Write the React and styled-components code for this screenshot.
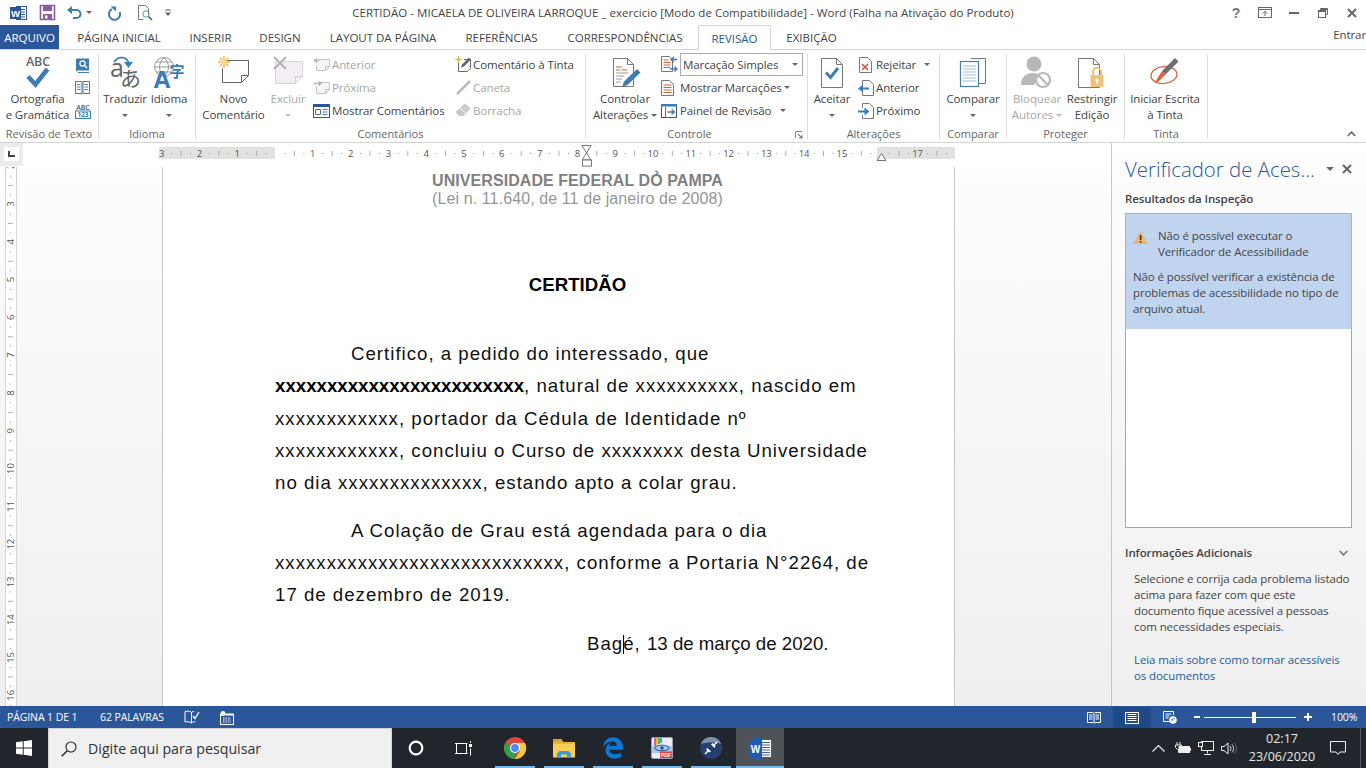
import React from 'react';
import styled, { createGlobalStyle } from 'styled-components';
import { FaEdgeLegacy } from 'react-icons/fa6';

const UI = '"Open Sans", "Noto Sans", "Liberation Sans", sans-serif';
const BLUE = '#2b579a';
const ICON_BLUE = '#3e7cb8';

const Global = createGlobalStyle`
  html, body { margin: 0; padding: 0; width: 1366px; height: 768px; overflow: hidden; background: #fff; }
  #root { width: 1366px; height: 768px; }
  * { box-sizing: border-box; }
`;

const Win = styled.div`
  width: 1366px;
  height: 768px;
  display: flex;
  flex-direction: column;
  overflow: hidden;
  font-family: ${UI};
  font-size: 11.5px;
  letter-spacing: -0.1px;
  color: #444;
`;

/* title bar */
const TitleBar = styled.div`
  height: 25px;
  display: grid;
  grid-template-columns: 1fr auto 1fr;
  align-items: center;
  background: #fff;
`;
const Qat = styled.div`
  display: flex;
  align-items: center;
`;
const Slot = styled.div`
  width: ${p => p.$w}px;
  height: 25px;
  display: flex;
  align-items: center;
  justify-content: center;
  gap: 4px;
`;
const TitleText = styled.div`
  white-space: nowrap;
  letter-spacing: 0.03px;
`;
const WinControls = styled.div`
  display: flex;
  justify-content: flex-end;
`;

/* tabs */
const TabRow = styled.div`
  height: 25px;
  display: flex;
  background: #fff;
  border-bottom: 1px solid #d4d4d4;
`;
const Tab = styled.div`
  width: ${p => p.$w}px;
  height: ${p => (p.$active ? 25 : 24)}px;
  margin-left: ${p => p.$ml || 0}px;
  display: flex;
  align-items: center;
  justify-content: center;
  white-space: nowrap;
  letter-spacing: 0;
  background: ${p => (p.$file ? BLUE : '#fff')};
  color: ${p => (p.$file ? '#fff' : p.$active ? BLUE : '#444')};
  ${p => p.$active && 'border: 1px solid #d4d4d4; border-bottom: none; position: relative; z-index: 1;'}
`;
const Entrar = styled.div`
  margin-left: auto;
  line-height: 19px;
  white-space: nowrap;
`;

/* ribbon */
const Ribbon = styled.div`
  height: 93px;
  display: flex;
  padding-top: 4px;
  background: #fff;
  border-bottom: 1px solid #d4d4d4;
`;
const Group = styled.div`
  width: ${p => p.$w}px;
  height: 85px;
  display: flex;
  flex-direction: column;
  border-right: 1px solid #dedede;
  position: relative;
`;
const GroupBody = styled.div`
  height: 71px;
  display: flex;
  padding-left: ${p => p.$pl || 0}px;
`;
const GroupLabel = styled.div`
  height: 14px;
  line-height: 18px;
  padding-right: ${p => p.$pr || 0}px;
  text-align: center;
  color: #666;
  white-space: nowrap;
  letter-spacing: 0;
  font-size: 11px;
`;
const Launcher = styled.div`
  position: absolute;
  right: 4px;
  bottom: 0;
  line-height: 0;
`;
const Large = styled.div`
  width: ${p => p.$w}px;
  flex: none;
  display: flex;
  flex-direction: column;
  align-items: center;
  color: ${p => (p.$off ? '#a6a6a6' : '#444')};
`;
const LargeIcon = styled.div`
  height: 37px;
  padding-top: ${p => p.$pt || 0}px;
  display: flex;
  align-items: flex-start;
  justify-content: center;
`;
const LargeLine = styled.div`
  height: 16px;
  line-height: 16px;
  white-space: nowrap;
  display: flex;
  align-items: center;
  gap: 3px;
`;
const Stack = styled.div`
  margin-left: ${p => p.$ml || 0}px;
  margin-top: -1px;
  width: ${p => (p.$w ? `${p.$w}px` : 'auto')};
  display: flex;
  flex-direction: column;
  flex: none;
`;
const SmallBtn = styled.div`
  height: 23px;
  display: flex;
  align-items: center;
  gap: ${p => p.$gap ?? 3}px;
  white-space: nowrap;
  color: ${p => (p.$off ? '#a6a6a6' : '#444')};
`;
const Caret = styled.span`
  display: inline-block;
  flex: none;
  width: 0;
  height: 0;
  margin-left: ${p => p.$ml || 0}px;
  border-left: ${p => p.$size || 3}px solid transparent;
  border-right: ${p => p.$size || 3}px solid transparent;
  border-top: ${p => p.$size || 3}px solid ${p => (p.$off ? '#bdbdbd' : '#666')};
`;
const Dropdown = styled.div`
  width: 123px;
  height: 23px;
  margin-left: -1px;
  padding: 0 4px 0 2px;
  display: flex;
  align-items: center;
  justify-content: space-between;
  border: 1px solid #ababab;
`;
const Collapse = styled.div`
  margin-left: auto;
  margin-right: 10px;
  margin-bottom: 5px;
  align-self: flex-end;
  line-height: 0;
`;

/* middle area */
const Middle = styled.div`
  height: 563px;
  display: flex;
`;
const Workspace = styled.div`
  flex: 1;
  display: flex;
  flex-direction: column;
  min-width: 0;
  background: linear-gradient(#ffffff, #fdfdfd 5%, #efefef);
`;
const RulerRow = styled.div`
  height: 24px;
  flex: none;
  display: flex;
  background: #fff;
`;
const Corner = styled.div`
  width: 23px;
  height: 23px;
  flex: none;
  padding: 4px;
  background: #ececec;
`;
const CornerInner = styled.div`
  width: 15px;
  height: 14px;
  display: flex;
  align-items: center;
  justify-content: center;
  background: #fff;
`;
const HRulerWrap = styled.div`
  margin-left: 136px;
  line-height: 0;
`;
const DocRow = styled.div`
  flex: 1;
  display: flex;
  overflow: hidden;
  min-height: 0;
`;
const VRulerWrap = styled.div`
  width: 12px;
  margin-left: 5px;
  flex: none;
  line-height: 0;
  background: #fff;
  border-left: 1px solid #d6d6d6;
  border-right: 1px solid #d6d6d6;
`;
const Page = styled.div`
  width: 793px;
  margin-left: 145px;
  flex: none;
  padding: 5px 0 0 112px;
  background: #fff;
  border-left: 1px solid #c6c6c6;
  border-right: 1px solid #c6c6c6;
  font-family: "Liberation Sans", Arial, sans-serif;
  color: #111;
  letter-spacing: 0;
`;
const Sheet = styled.div`
  width: 605px;
`;
const Uni = styled.div`
  height: 18px;
  line-height: 18px;
  text-align: center;
  font-size: 16px;
  white-space: nowrap;
  font-weight: ${p => (p.$bold ? 700 : 400)};
  letter-spacing: ${p => (p.$bold ? 0.07 : 0.1)}px;
  color: ${p => (p.$bold ? '#808080' : '#969696')};
`;
const DocTitle = styled.div`
  margin-top: 61px;
  height: 32px;
  line-height: 32px;
  text-align: center;
  font-size: 18.67px;
  font-weight: 700;
  color: #000;
`;
const Para = styled.div`
  margin-top: ${p => p.$mt}px;
  font-size: 18.67px;
  line-height: 32.33px;
  letter-spacing: 1px;
  white-space: nowrap;
`;
const Indent = styled.span`
  display: inline-block;
  width: 76px;
`;
const Strong = styled.b`
  letter-spacing: 0;
  color: #000;
`;
const DateLine = styled(Para)`
  padding-left: 312px;
`;
const Tight = styled.span`
  letter-spacing: 0;
`;
const TextCaret = styled.span`
  display: inline-block;
  width: 1px;
  height: 19px;
  margin-right: -1px;
  vertical-align: -4px;
  background: #000;
`;

/* side pane */
const Pane = styled.div`
  width: 255px;
  flex: none;
  padding: 11px 0 0 13px;
  border-left: 1px solid #c6c6c6;
  background: linear-gradient(#ffffff, #fdfdfd 5%, #efefef);
`;
const PaneHead = styled.div`
  height: 30px;
  display: flex;
  align-items: center;
`;
const PaneTitle = styled.div`
  width: 201px;
  font-size: 20.4px;
  font-weight: 300;
  color: ${BLUE};
  white-space: nowrap;
  letter-spacing: 0;
`;
const PaneSub = styled.div`
  margin-top: ${p => p.$mt}px;
  height: 16px;
  line-height: 16px;
  font-weight: 600;
  color: #444;
  font-size: 11.5px;
  white-space: nowrap;
  display: flex;
  justify-content: space-between;
  align-items: center;
  width: 223px;
`;
const Results = styled.div`
  margin-top: 6px;
  width: 227px;
  height: 315px;
  background: #fff;
  border: 1px solid #a6a6a6;
`;
const Banner = styled.div`
  height: 116px;
  margin: -1px -1px 0;
  padding: 14px 7px 0 7px;
  background: #c1d4ef;
  border: 1px solid #9db4d6;
  border-bottom: none;
  line-height: 16px;
  white-space: nowrap;
`;
const WarnRow = styled.div`
  display: flex;
  gap: 10px;
  margin-bottom: 9px;
`;
const WarnIcon = styled.div`
  padding-top: 3px;
  line-height: 0;
`;
const PaneText = styled.div`
  margin-top: ${p => p.$mt}px;
  padding-left: 9px;
  line-height: 16px;
  white-space: nowrap;
  color: ${p => (p.$link ? '#1f5c99' : '#444')};
`;

/* status bar */
const StatusBar = styled.div`
  height: 22px;
  flex: none;
  display: flex;
  align-items: center;
  background: ${BLUE};
  color: #fff;
  font-size: 10.5px;
  padding-left: 7px;
`;
const StatusText = styled.span`
  width: ${p => p.$w}px;
  white-space: nowrap;
`;
const StatusIcon = styled.div`
  width: ${p => p.$w}px;
  height: 21px;
  margin-left: ${p => p.$ml || 0}px;
  margin-top: 1px;
  flex: none;
  display: flex;
  align-items: center;
  justify-content: center;
  background: ${p => (p.$on ? '#1f4a88' : 'transparent')};
`;
const Zoom = styled.div`
  width: 118px;
  margin-left: 17px;
  display: flex;
  align-items: center;
  flex: none;
`;
const Track = styled.div`
  width: 100px;
  height: 1px;
  margin: 0 8px 0 4px;
  background: #fff;
  position: relative;
`;
const Thumb = styled.div`
  position: absolute;
  left: 48px;
  top: -5px;
  width: 4px;
  height: 11px;
  background: #fff;
`;
const ZoomText = styled.span`
  margin-left: 19px;
  font-size: 10.5px;
`;

/* taskbar */
const Taskbar = styled.div`
  height: 40px;
  flex: none;
  display: flex;
  background: #20262b;
`;
const StartBtn = styled.div`
  width: 48px;
  display: flex;
  align-items: center;
  justify-content: center;
`;
const SearchBox = styled.div`
  width: 344px;
  display: flex;
  align-items: center;
  gap: 11px;
  padding-left: 12px;
  background: #f0f0f0;
  border: 1px solid #d2d2d2;
  border-bottom: none;
  font-size: 14.2px;
  color: #333;
  letter-spacing: 0;
`;
const TaskSlot = styled.div`
  width: ${p => p.$w}px;
  margin-left: ${p => p.$ml || 0}px;
  flex: none;
  display: flex;
  align-items: center;
  justify-content: center;
  background: ${p => (p.$active ? '#4f5357' : 'transparent')};
  box-shadow: ${p => (p.$run ? 'inset 0 -2px 0 #76b9ed' : 'none')};
`;
const Tray = styled.div`
  margin-left: auto;
  display: flex;
  align-items: center;
`;
const TrayIcon = styled.div`
  width: ${p => p.$w}px;
  display: flex;
  justify-content: center;
  line-height: 0;
`;
const Clock = styled.div`
  width: 68px;
  margin-left: 8px;
  text-align: center;
  color: #e8e8e8;
  font-size: 12.5px;
  line-height: 18px;
  letter-spacing: 0;
`;
const NotifyBtn = styled.div`
  width: 45px;
  height: 40px;
  margin-left: 0;
  display: flex;
  align-items: center;
  justify-content: center;
  border-right: 1px solid #55595d;
  margin-right: 5px;
`;

const Svg = styled.svg`
  display: block;
  flex: none;
  overflow: visible;
`;
const Ico = ({ w = 16, h = 16, children }) => (
  <Svg width={w} height={h} viewBox={`0 0 ${w} ${h}`} fill="none">{children}</Svg>
);

/* quick access icons */
const WordMini = () => (
  <Ico w={17} h={16}>
    <rect x="6.5" y="1.5" width="10" height="13" fill="#fff" stroke={BLUE} />
    <path d="M11 4.5h4M11 7h4M11 9.5h4M11 12h4" stroke={BLUE} />
    <rect x="0" y="2" width="11" height="12" fill={BLUE} />
    <text x="5.5" y="11.5" fontSize="9.5" fontWeight="700" fill="#fff" textAnchor="middle" fontFamily="Liberation Sans">W</text>
  </Ico>
);
const SaveIco = () => (
  <Ico w={15} h={15}>
    <path d="M0.5 0.5h14v14h-14z" fill="#fff" stroke="#8b5ba8" strokeWidth="1.6" />
    <rect x="3" y="1" width="9" height="5" fill="#8b5ba8" />
    <rect x="3" y="9" width="9" height="5.5" fill="#8b5ba8" />
    <rect x="5" y="10.5" width="2.5" height="3" fill="#fff" />
  </Ico>
);
const UndoIco = () => (
  <Ico w={15} h={13}>
    <path d="M2 4h7.5a4 4 0 0 1 0 8H6" stroke="#3e7cb8" strokeWidth="2" />
    <path d="M5 0L0 4l5 4z" fill="#3e7cb8" />
  </Ico>
);
const RedoIco = () => (
  <Ico w={14} h={14}>
    <path d="M4 2.2A5.6 5.6 0 1 0 11.7 5" stroke="#3e7cb8" strokeWidth="2" transform="translate(0 1)" />
    <path d="M2.5 0.5h5.5v5z" fill="#3e7cb8" />
  </Ico>
);
const PreviewIco = () => (
  <Ico w={15} h={16}>
    <path d="M0.5 0.5h7l3 3v6M0.5 0.5v14h5" stroke="#777" />
    <circle cx="8" cy="9" r="3.2" stroke="#5f8fb4" />
    <path d="M10.5 11.5l3.5 3.5" stroke="#555" strokeWidth="1.6" />
  </Ico>
);
const CustomizeIco = () => (
  <Ico w={6} h={7}>
    <path d="M0 1h6" stroke="#666" />
    <path d="M0 3.5h6L3 7z" fill="#666" />
  </Ico>
);
const HelpIco = () => (
  <Ico w={10} h={13}>
    <text x="5" y="12" textAnchor="middle" fontSize="14" fontWeight="700" fill="#777" fontFamily="Liberation Sans">?</text>
  </Ico>
);
const RibbonOptsIco = () => (
  <Ico w={14} h={11}>
    <rect x="0.5" y="0.5" width="13" height="10" stroke="#666" />
    <path d="M0.5 2.5h13" stroke="#666" />
    <path d="M7 9V4.5M4.8 6.5L7 4.2l2.2 2.3" stroke="#666" />
  </Ico>
);
const MinIco = () => <Ico w={10} h={2}><rect width="10" height="2" fill="#666" /></Ico>;
const MaxIco = () => (
  <Ico w={10} h={10}>
    <path d="M2.5 2.5v-2h7v6h-2" stroke="#666" />
    <rect x="0.5" y="2.5" width="7" height="7" stroke="#666" />
    <path d="M0.5 3.5h7M2.5 1.5h7" stroke="#666" />
  </Ico>
);
const CloseIco = ({ size = 10, color = '#666' }) => (
  <Ico w={size} h={size}>
    <path d={`M1 1L${size - 1} ${size - 1}M${size - 1} 1L1 ${size - 1}`} stroke={color} strokeWidth="2" />
  </Ico>
);

/* ribbon large icons */
const SpellIco = () => (
  <Ico w={30} h={36}>
    <text x="15" y="12" textAnchor="middle" fontSize="12.5" fontWeight="600" fill="#666" fontFamily="Open Sans">ABC</text>
    <path d="M5 22.5l7.5 8L24.5 15" stroke={ICON_BLUE} strokeWidth="4.6" />
  </Ico>
);
const TranslateIco = () => (
  <Ico w={34} h={34}>
    <text x="2" y="22" fontSize="25" fill="#666" fontFamily="Open Sans">a</text>
    <text x="12" y="31" fontSize="21" fill="#666" fontFamily="Noto Sans CJK JP">あ</text>
    <path d="M6 7c4-6 12-6 15 1" stroke={ICON_BLUE} strokeWidth="1.8" />
    <path d="M16 7h9l-4.500 6z" fill={ICON_BLUE} />
  </Ico>
);
const LanguageIco = () => (
  <Ico w={34} h={34}>
    <circle cx="12" cy="12" r="9.5" stroke="#999" />
    <path d="M12 2.5c-6 6-6 13 0 19M12 2.500c6 6 6 13 0 19M2.500 12h19M4 7h16M4 17h16" stroke="#999" />
    <text x="10" y="33" textAnchor="middle" fontSize="24" fontWeight="700" fill={ICON_BLUE} fontFamily="Open Sans">A</text>
    <text x="25" y="22" textAnchor="middle" fontSize="15" fontWeight="700" fill={ICON_BLUE} fontFamily="Noto Sans CJK SC">字</text>
  </Ico>
);
const Sun = ({ x, y, c = '#f0b74f' }) => (
  <g transform={`translate(${x} ${y})`}>
    <path d="M6 0v12M0 6h12M1.800 1.800l8.400 8.400M10.200 1.800L1.800 10.200" stroke={c} strokeWidth="1.400" />
    <circle cx="6" cy="6" r="2.600" fill="#ffd98a" />
  </g>
);
const NoteNewIco = () => (
  <Ico w={32} h={30}>
    <path d="M9 4.500h21.500v15l-7 7h-19v-14" stroke="#666" fill="#fff" />
    <path d="M23.500 26.500v-7h7" stroke="#666" />
    <Sun x={0} y={0} />
  </Ico>
);
const NoteDelIco = () => (
  <Ico w={32} h={30}>
    <path d="M3.500 5.500h27v15l-7 7h-20z" fill="#f3eef3" stroke="#d6d6d6" />
    <path d="M23.500 27.500v-7h7" stroke="#cfcfcf" />
    <path d="M2 1l12 12M14 1L2 13" stroke="#b3b3b3" strokeWidth="2" />
  </Ico>
);
const TrackIco = () => (
  <Ico w={30} h={34}>
    <path d="M3.500 4.500h14l6 6v22h-20z" fill="#fff" stroke="#777" />
    <path d="M17.500 4.500v6h6" stroke="#777" />
    <path d="M6 13h6M6 16h4M11.500 16h6" stroke="#d2603a" strokeWidth="1.100" />
    <path d="M6 19h12M6 22h8M6 25h6M6 28h5" stroke="#999" strokeWidth="1.100" />
    <path d="M27 15l3.500 3.500-13 12.500-5.500 2 2-5.500z" fill={ICON_BLUE} />
  </Ico>
);
const AcceptIco = () => (
  <Ico w={22} h={30}>
    <path d="M0.500 0.500h15l6 6v23h-21z" fill="#fff" stroke="#777" />
    <path d="M15.500 0.500v6h6" stroke="#777" />
    <path d="M5 14.500l4.500 5L17 10" stroke={ICON_BLUE} strokeWidth="3" />
  </Ico>
);
const CompareIco = () => (
  <Ico w={26} h={30}>
    <path d="M10.500 0.500h15v25h-8" fill="#fff" stroke="#777" />
    <rect x="0.500" y="3.500" width="18" height="25" fill="#fff" stroke="#4a7db3" strokeWidth="1.200" />
    <path d="M3 8h13M3 11h13M3 14h13M3 17h13M3 20h13M3 23h13" stroke="#9db9d8" />
  </Ico>
);
const BlockIco = () => (
  <Ico w={32} h={32}>
    <circle cx="13" cy="8" r="7.500" fill="#b8b8b8" />
    <path d="M0 29c0-8 5-12 12-12 3 0 5 1 7 2l-6 10z" fill="#b8b8b8" />
    <circle cx="22" cy="24" r="7" fill="#fff" stroke="#b8b8b8" strokeWidth="2.200" />
    <path d="M17.500 19.500l9 9" stroke="#b8b8b8" strokeWidth="2.200" />
  </Ico>
);
const RestrictIco = () => (
  <Ico w={28} h={30}>
    <path d="M0.500 0.500h15l6 6v23h-21z" fill="#fff" stroke="#777" />
    <path d="M15.500 0.500v6h6" stroke="#777" />
    <path d="M15 17v-3a4 4 0 0 1 8 0v3" stroke="#eac27c" strokeWidth="2" />
    <rect x="12.500" y="17" width="13" height="12" fill="#eec37a" />
    <circle cx="19" cy="22" r="1.600" fill="#fff" />
    <rect x="18.300" y="22" width="1.400" height="4" fill="#fff" />
  </Ico>
);
const InkIco = () => (
  <Ico w={30} h={30}>
    <ellipse cx="14" cy="18" rx="13" ry="8.500" stroke="#d9623c" strokeWidth="1.300" transform="rotate(-6 14 18)" />
    <path d="M25 1l3.500 3.500-13 13L12 14z" fill="#6e6e6e" />
    <path d="M12 14l3.500 3.500L9 24l-4 2 2-4z" fill="#d9623c" />
  </Ico>
);

/* ribbon small icons */
const ThesaurusIco = () => (
  <Ico w={15} h={16}>
    <path d="M1 1.500h13v12H3a2 2 0 0 0-2 2z" fill={ICON_BLUE} />
    <path d="M3 15.500h11" stroke={ICON_BLUE} />
    <circle cx="7.500" cy="6.500" r="2.600" stroke="#fff" strokeWidth="1.200" />
    <path d="M9.500 8.500l2.500 2.500" stroke="#fff" strokeWidth="1.400" />
  </Ico>
);
const BookIco = () => (
  <Ico w={15} h={13}>
    <path d="M0.500 0.500h6.500v12h-6.500zM8 0.500h6.500v12H8z" stroke={ICON_BLUE} />
    <path d="M2 3.500h3.500M2 6h3.500M2 8.500h3.500M9.500 3.500H13M9.500 6H13M9.500 8.500H13" stroke="#777" />
  </Ico>
);
const CountIco = () => (
  <Ico w={16} h={16}>
    <text x="8" y="6.500" textAnchor="middle" fontSize="7" fontWeight="600" fill="#555" fontFamily="Open Sans">ABC</text>
    <rect x="0.500" y="8" width="15" height="7.500" stroke={ICON_BLUE} fill="#fff" />
    <text x="8" y="14.300" textAnchor="middle" fontSize="6.500" fontWeight="700" fill={ICON_BLUE} fontFamily="Open Sans">123</text>
  </Ico>
);
const PrevNoteIco = () => (
  <Ico w={17} h={15}>
    <path d="M5 2.500h11.500v7l-4 4H3.500V8" stroke="#c6c6c6" fill="#f8f5f8" />
    <path d="M12.500 13.500v-4h4" stroke="#c6c6c6" />
    <path d="M1 3.500h5" stroke="#b5b5b5" strokeWidth="1.400" />
    <path d="M4 0.500L0.500 3.500 4 6.500z" fill="#b5b5b5" />
  </Ico>
);
const NextNoteIco = () => (
  <Ico w={17} h={15}>
    <path d="M7 2.500h9.500v7l-4 4H3.500V6" stroke="#c6c6c6" fill="#f8f5f8" />
    <path d="M12.500 13.500v-4h4" stroke="#c6c6c6" />
    <path d="M0.500 3.500H7" stroke="#b5b5b5" strokeWidth="1.400" />
    <path d="M5.500 0.500L9 3.500 5.500 6.500z" fill="#b5b5b5" />
  </Ico>
);
const ShowNotesIco = () => (
  <Ico w={17} h={14}>
    <rect x="0.500" y="0.500" width="16" height="13" fill="#fff" stroke="#44546a" />
    <rect x="0" y="0" width="17" height="3" fill={BLUE} />
    <path d="M2.500 5.500h5v5h-5z" stroke="#666" />
    <path d="M9.500 5.500h5M9.500 8h5M9.500 10.500h5" stroke={ICON_BLUE} />
  </Ico>
);
const InkNoteIco = () => (
  <Ico w={17} h={17}>
    <path d="M3.500 6.500v9h9l3-3V3.500H9" stroke="#666" fill="#fff" />
    <circle cx="3.500" cy="3.500" r="2" fill="#f4c76e" />
    <path d="M3.500 0v7M0 3.500h7" stroke="#f0b74f" />
    <path d="M14 1.500l2 2-7 7-3 1 1-3z" fill="#666" />
  </Ico>
);
const PenIco = () => (
  <Ico w={16} h={16}>
    <path d="M15 1L2 14" stroke="#bdbdbd" strokeWidth="2.600" />
  </Ico>
);
const EraserIco = () => (
  <Ico w={16} h={15}>
    <path d="M10 0.500l5.500 5-7 7.500H4l-3.500-4z" fill="#c9c9c9" />
    <path d="M4.500 4.500l6 5.500" stroke="#fff" />
  </Ico>
);
const SwitchIco = () => (
  <Ico w={17} h={17}>
    <path d="M0.500 0.500h8l3 3v12h-11z" fill="#fff" stroke="#777" />
    <path d="M2.500 4h5M2.500 6.500h7M2.500 9h7M2.500 11.500h7" stroke="#d2603a" />
    <path d="M10 3.500h6M13 1l-3 2.500L13 6" stroke={ICON_BLUE} strokeWidth="1.300" />
    <path d="M9 13h7M13.500 10.500L16 13l-2.500 2.500" stroke={ICON_BLUE} strokeWidth="1.300" />
  </Ico>
);
const MarkupIco = () => (
  <Ico w={13} h={16}>
    <path d="M0.500 0.500h8l4 4v11H0.500z" fill="#fff" stroke="#777" />
    <path d="M2.500 5h8M2.500 7.500h8M2.500 10h8M2.500 12.500h8" stroke="#d2603a" />
  </Ico>
);
const PanelIco = () => (
  <Ico w={16} h={14}>
    <rect x="0.500" y="0.500" width="15" height="13" fill="#fff" stroke="#44546a" />
    <rect width="16" height="2.500" fill={ICON_BLUE} />
    <path d="M4.500 3v10" stroke={ICON_BLUE} />
    <path d="M6.500 8h7M10.500 5.500L13.500 8l-3 2.500" stroke={ICON_BLUE} strokeWidth="1.300" />
  </Ico>
);
const RejectIco = () => (
  <Ico w={15} h={16}>
    <path d="M1.500 0.500h8l4 4v11h-12z" fill="#fff" stroke="#777" />
    <path d="M4 7l6 6M10 7l-6 6" stroke="#d2503a" strokeWidth="1.500" />
  </Ico>
);
const DocArrowIco = ({ dir }) => (
  <Ico w={16} h={16}>
    <path d="M4.500 5V0.500h7l4 4v11h-11V12" fill="#fff" stroke="#777" />
    {dir === 'left'
      ? <g><path d="M2 8.500h9" stroke={ICON_BLUE} strokeWidth="2" /><path d="M5 4.500L0 8.500l5 4z" fill={ICON_BLUE} /></g>
      : <g><path d="M0 8.500h8" stroke={ICON_BLUE} strokeWidth="2" /><path d="M6.500 4.500l5 4-5 4z" fill={ICON_BLUE} /></g>}
  </Ico>
);
const LauncherIco = () => (
  <Ico w={8} h={8}>
    <path d="M0.500 7V0.500H7" stroke="#888" />
    <path d="M3 3l4 4M7 4v3H4" stroke="#666" />
  </Ico>
);
const ChevronUp = () => (
  <Ico w={9} h={6}>
    <path d="M0.700 5L4.500 1.200 8.300 5" stroke="#666" strokeWidth="1.600" />
  </Ico>
);

const CM = 37.795;
const HRuler = () => {
  const zero = 116;
  const marks = [];
  for (let n = -3; n <= 17; n++) {
    const x = zero + n * CM;
    if (n !== 0 && n !== 16) {
      marks.push(<text key={`n${n}`} x={x} y={13.5} textAnchor="middle" fontSize="9.5" fill="#555" fontFamily="Open Sans">{Math.abs(n)}</text>);
    }
    [0.25, 0.75].forEach(f => marks.push(<rect key={`d${n}${f}`} x={x + f * CM} y={10} width="1" height="1" fill="#999" />));
    marks.push(<rect key={`l${n}`} x={x + 0.5 * CM} y={8} width="1" height="5" fill="#b0b0b0" />);
  }
  return (
    <Svg width={796} height={23} viewBox="0 0 796 23">
      <rect x="0" y="4" width="796" height="12" fill="#e1e1e1" />
      <rect x="116" y="4" width="602" height="12" fill="#fff" />
      {marks.filter(m => Number(m.props.x) < 796)}
      <path d="M423 2.500h9l-4.500 7.500 4.500 7h-9l4.500-7z" fill="#fff" stroke="#777" />
      <rect x="423.500" y="17" width="9" height="6" fill="#fff" stroke="#777" />
      <path d="M718 17.500l4.500-7 4.500 7z" fill="#fff" stroke="#777" />
    </Svg>
  );
};
const VRuler = () => {
  const marks = [];
  for (let n = 2; n <= 16; n++) {
    const y = 37 + (n - 3) * CM;
    marks.push(<text key={`n${n}`} x={5} y={y + 3} transform={`rotate(-90 5 ${y})`} textAnchor="middle" fontSize="9.5" fill="#555" fontFamily="Open Sans">{n}</text>);
    [0.25, 0.75].forEach(f => marks.push(<rect key={`d${n}${f}`} x="4" y={y + f * CM} width="1" height="1" fill="#999" />));
    marks.push(<rect key={`l${n}`} x="2" y={y + 0.5 * CM} width="5" height="1" fill="#b0b0b0" />);
  }
  return <Svg width={10} height={539} viewBox="0 0 10 539">{marks}</Svg>;
};

/* status bar icons */
const ProofIco = () => (
  <Ico w={15} h={15}>
    <path d="M7.500 2.500C6 1 3 1 1 1.500V12c2-.5 5-.5 6.500 1M7.500 2.500V13M7.500 13c1-1 2.500-1.300 4-1.300M7.500 2.500C8 2 9 1.500 10 1.400" stroke="#fff" />
    <path d="M9 6l2 2.500L15 2" stroke="#fff" strokeWidth="1.300" />
  </Ico>
);
const MacroIco = () => (
  <Ico w={14} h={14}>
    <rect x="0.500" y="3.500" width="13" height="10" stroke="#fff" fill={BLUE} />
    <circle cx="3" cy="2.500" r="2.500" fill="#fff" />
    <path d="M6 2.500h7.500V4.500H6z" fill="#fff" />
    <path d="M3 7h8M3 9h8M3 11h8" stroke="#fff" strokeDasharray="1.500 1" />
  </Ico>
);
const ReadIco = () => (
  <Ico w={14} h={13}>
    <path d="M0.500 1.500h5.500l1 1 1-1h5.500v10H8l-1 1-1-1H0.500z" stroke="#fff" />
    <path d="M2 4h3.500M2 6h3.500M2 8h3.500M8.500 4H12M8.500 6H12M8.500 8H12M7 2.500v9" stroke="#fff" />
  </Ico>
);
const PrintIco = () => (
  <Ico w={14} h={12}>
    <rect x="0.500" y="0.500" width="13" height="11" stroke="#fff" />
    <path d="M2.500 2.500h9M2.500 4.500h9M2.500 6.500h9M2.500 8.500h9" stroke="#fff" />
  </Ico>
);
const WebIco = () => (
  <Ico w={14} h={13}>
    <path d="M6 10.500H0.500v-10h10V4" stroke="#fff" />
    <path d="M2.500 3h6M2.500 5h4M2.500 7h3" stroke="#fff" />
    <circle cx="10" cy="9" r="3.800" fill="#fff" />
    <path d="M8 7.500l2 1-1 2zM11 6.500l1 2-2-.5z" fill={BLUE} />
  </Ico>
);

/* taskbar icons */
const WinLogo = () => (
  <Ico w={16} h={16}>
    <path d="M0 2.300l6.800-1v6.300H0zM7.700 1.200L16 0v7.600H7.700zM0 8.500h6.800v6.300l-6.800-1zM7.700 8.500H16V16l-8.300-1.200z" fill="#fff" />
  </Ico>
);
const SearchIco = () => (
  <Ico w={16} h={16}>
    <circle cx="10" cy="6" r="5" stroke="#222" strokeWidth="1.100" />
    <path d="M6.300 9.700L0.700 15.300" stroke="#222" strokeWidth="1.400" />
  </Ico>
);
const CortanaIco = () => <Ico w={16} h={16}><circle cx="8" cy="8" r="6.300" stroke="#fff" strokeWidth="2.200" /></Ico>;
const TaskViewIco = () => (
  <Ico w={18} h={15}>
    <path d="M0 2.500h12.500M0 12.500h12.500M1.500 3v9M11.500 3v9" stroke="#fff" />
    <rect x="14" y="3" width="3" height="3" fill="#fff" />
    <path d="M15.500 7.500v7M15.500 0v2" stroke="#fff" />
  </Ico>
);
const ChromeIco = () => (
  <Ico w={22} h={22}>
    <circle cx="11" cy="11" r="11" fill="#dd4b3e" />
    <path d="M11 11L1.500 5.500A11 11 0 0 0 11 22z" fill="#2fa04b" />
    <path d="M11 6h10a11 11 0 0 1-10 16l5-8z" fill="#fcc934" />
    <circle cx="11" cy="11" r="5" fill="#fff" />
    <circle cx="11" cy="11" r="3.900" fill="#4c8bf5" />
  </Ico>
);
const FolderIco = () => (
  <Ico w={22} h={19}>
    <path d="M0 1.500h9l2 2h11v15H0z" fill="#f5cd58" />
    <path d="M0 0h9v3H0z" fill="#dca32c" />
    <path d="M0 3h22v2H0z" fill="#e8b73f" />
    <path d="M4 18.500v-4l2.500-2.500h9l2.500 2.500v4h-4v-3H8v3z" fill="#3b9bd6" />
  </Ico>
);
const PdfIco = () => (
  <Ico w={22} h={22}>
    <rect x="0.500" y="0.500" width="21" height="21" rx="1.500" fill="#e9eef6" stroke="#9aa3b5" />
    <path d="M3 1h2v8H3z" fill="#cf5ac0" />
    <path d="M5 1h2v7H5z" fill="#e8c32f" />
    <path d="M7 1h2v6H7z" fill="#58b947" />
    <path d="M9 1h2v5H9z" fill="#4f9be0" />
    <path d="M1 9h20v7H1z" fill="#a8c6ea" />
    <ellipse cx="11" cy="11" rx="7" ry="2.800" stroke="#254f93" />
    <circle cx="11" cy="11" r="1.700" fill="#254f93" />
    <rect x="9" y="14.500" width="12" height="6.500" fill="#e8402c" />
    <text x="15" y="20" textAnchor="middle" fontSize="5.500" fontWeight="700" fill="#fff" fontFamily="Liberation Sans">PDF</text>
  </Ico>
);
const LinkAppIco = () => (
  <Ico w={22} h={22}>
    <circle cx="11" cy="11" r="11" fill="#25406f" />
    <path d="M0.800 7A11 11 0 0 1 21.200 7C15 5 7 5 0.800 7z" fill="#7f90ad" />
    <path d="M5 17l3.500-3.500M13.500 8.500L17 5" stroke="#fff" strokeWidth="1.500" />
    <path d="M7.500 11l3.500 3.500-2 1-3-3zM11 7.500l3.500 3.500 1-2-3-3z" fill="#fff" />
  </Ico>
);
const WordBig = () => (
  <Ico w={23} h={23}>
    <rect x="9" y="2.500" width="13.500" height="18" fill="#fff" stroke="#2b60ab" />
    <path d="M13 5.500h8M13 8h8M13 10.500h8M13 13h8M13 15.500h8M13 18h8" stroke="#46629a" />
    <path d="M0 2.500L13 0v23L0 20.500z" fill="#1f5cb0" />
    <text x="6.500" y="15.500" textAnchor="middle" fontSize="10" fontWeight="700" fill="#fff" fontFamily="Liberation Sans">W</text>
  </Ico>
);
const TrayUp = () => <Ico w={13} h={8}><path d="M0.500 7.500L6.500 1.500l6 6" stroke="#eee" strokeWidth="1.200" /></Ico>;
const PowerIco = () => (
  <Ico w={17} h={13}>
    <path d="M3 0v3M6 0v3M1.500 3h6v2.500L5.500 7.500h-2L1.500 5.500zM4.500 7.500v3" stroke="#eee" />
    <rect x="4.500" y="4" width="11.500" height="7" fill="#eee" />
    <rect x="16" y="6" width="1" height="3" fill="#eee" />
  </Ico>
);
const NetIco = () => (
  <Ico w={16} h={14}>
    <rect x="3.500" y="0.500" width="12" height="9" stroke="#eee" />
    <rect x="0.500" y="1.500" width="4" height="4" fill="#20262b" stroke="#eee" />
    <path d="M9.500 9.500v3M6 13.500h7" stroke="#eee" />
  </Ico>
);
const VolIco = () => (
  <Ico w={16} h={13}>
    <path d="M0.500 4.500h2.500L7 1v11L3 8.500H0.500z" stroke="#eee" />
    <path d="M9 4c1.200 1.500 1.200 3.500 0 5M11 2.500c2 2.300 2 5.700 0 8" stroke="#eee" />
    <path d="M13.500 1c2.500 3 2.500 8 0 11" stroke="#666" />
  </Ico>
);
const NotifyIco = () => (
  <Ico w={16} h={15}>
    <path d="M0.500 0.500h15v10.500h-5.500L8 13.500 6 11H0.500z" stroke="#eee" />
  </Ico>
);
const WarnTri = () => (
  <Ico w={15} h={13}>
    <path d="M7.500 0L15 13H0z" fill="#e8b672" />
    <rect x="6.800" y="4" width="1.600" height="5" fill="#333" />
    <rect x="6.800" y="10" width="1.600" height="1.600" fill="#333" />
  </Ico>
);

const tabs = [
  ['PÁGINA INICIAL', 114, 3],
  ['INSERIR', 69],
  ['DESIGN', 70],
  ['LAYOUT DA PÁGINA', 136],
  ['REFERÊNCIAS', 101],
  ['CORRESPONDÊNCIAS', 146],
];

const App = () => (
  <Win>
    <Global />
    <TitleBar>
      <Qat>
        <Slot $w={36}><WordMini /></Slot>
        <Slot $w={22}><SaveIco /></Slot>
        <Slot $w={42}><UndoIco /><Caret /></Slot>
        <Slot $w={30}><RedoIco /></Slot>
        <Slot $w={30}><PreviewIco /></Slot>
        <Slot $w={16}><CustomizeIco /></Slot>
      </Qat>
      <TitleText>CERTIDÃO - MICAELA DE OLIVEIRA LARROQUE _ exercicio [Modo de Compatibilidade] - Word (Falha na Ativação do Produto)</TitleText>
      <WinControls>
        <Slot $w={29}><HelpIco /></Slot>
        <Slot $w={29}><RibbonOptsIco /></Slot>
        <Slot $w={29}><MinIco /></Slot>
        <Slot $w={29}><MaxIco /></Slot>
        <Slot $w={29}><CloseIco /></Slot>
      </WinControls>
    </TitleBar>

    <TabRow>
      <Tab $w={59} $file>ARQUIVO</Tab>
      {tabs.map(([t, w, ml]) => <Tab key={t} $w={w} $ml={ml}>{t}</Tab>)}
      <Tab $w={73} $active>REVISÃO</Tab>
      <Tab $w={81}>EXIBIÇÃO</Tab>
      <Entrar>Entrar</Entrar>
    </TabRow>

    <Ribbon>
      <Group $w={99}>
        <GroupBody>
          <Large $w={75}>
            <LargeIcon><SpellIco /></LargeIcon>
            <LargeLine>Ortografia</LargeLine>
            <LargeLine>e Gramática</LargeLine>
          </Large>
          <Stack>
            <SmallBtn><ThesaurusIco /></SmallBtn>
            <SmallBtn><BookIco /></SmallBtn>
            <SmallBtn><CountIco /></SmallBtn>
          </Stack>
        </GroupBody>
        <GroupLabel>Revisão de Texto</GroupLabel>
      </Group>

      <Group $w={97}>
        <GroupBody>
          <Large $w={52}>
            <LargeIcon $pt={1}><TranslateIco /></LargeIcon>
            <LargeLine>Traduzir</LargeLine>
            <LargeLine><Caret /></LargeLine>
          </Large>
          <Large $w={36}>
            <LargeIcon $pt={1}><LanguageIco /></LargeIcon>
            <LargeLine>Idioma</LargeLine>
            <LargeLine><Caret /></LargeLine>
          </Large>
        </GroupBody>
        <GroupLabel>Idioma</GroupLabel>
      </Group>

      <Group $w={390}>
        <GroupBody>
          <Large $w={75}>
            <LargeIcon $pt={2}><NoteNewIco /></LargeIcon>
            <LargeLine>Novo</LargeLine>
            <LargeLine>Comentário</LargeLine>
          </Large>
          <Large $w={34} $off>
            <LargeIcon $pt={2}><NoteDelIco /></LargeIcon>
            <LargeLine>Excluir</LargeLine>
            <LargeLine><Caret $off /></LargeLine>
          </Large>
          <Stack $ml={8} $w={142}>
            <SmallBtn $off $gap={2}><PrevNoteIco />Anterior</SmallBtn>
            <SmallBtn $off $gap={2}><NextNoteIco />Próxima</SmallBtn>
            <SmallBtn $gap={2}><ShowNotesIco />Mostrar Comentários</SmallBtn>
          </Stack>
          <Stack>
            <SmallBtn $gap={1}><InkNoteIco />Comentário à Tinta</SmallBtn>
            <SmallBtn $gap={2} $off><PenIco />Caneta</SmallBtn>
            <SmallBtn $gap={2} $off><EraserIco />Borracha</SmallBtn>
          </Stack>
        </GroupBody>
        <GroupLabel>Comentários</GroupLabel>
      </Group>

      <Group $w={222}>
        <GroupBody $pl={3}>
          <Large $w={72}>
            <LargeIcon><TrackIco /></LargeIcon>
            <LargeLine>Controlar</LargeLine>
            <LargeLine>Alterações<Caret /></LargeLine>
          </Large>
          <Stack>
            <SmallBtn><SwitchIco /><Dropdown>Marcação Simples<Caret /></Dropdown></SmallBtn>
            <SmallBtn $gap={6}><MarkupIco />Mostrar Marcações<Caret $ml={-4} /></SmallBtn>
            <SmallBtn $gap={3}><PanelIco />Painel de Revisão<Caret $ml={6} /></SmallBtn>
          </Stack>
        </GroupBody>
        <GroupLabel $pr={14}>Controle</GroupLabel>
        <Launcher><LauncherIco /></Launcher>
      </Group>

      <Group $w={132}>
        <GroupBody>
          <Large $w={48}>
            <LargeIcon $pt={4}><AcceptIco /></LargeIcon>
            <LargeLine>Aceitar</LargeLine>
            <LargeLine><Caret /></LargeLine>
          </Large>
          <Stack $ml={2}>
            <SmallBtn $gap={3}><RejectIco />Rejeitar<Caret $ml={5} /></SmallBtn>
            <SmallBtn $gap={2}><DocArrowIco dir="left" />Anterior</SmallBtn>
            <SmallBtn $gap={2}><DocArrowIco dir="right" />Próximo</SmallBtn>
          </Stack>
        </GroupBody>
        <GroupLabel>Alterações</GroupLabel>
      </Group>

      <Group $w={67}>
        <GroupBody>
          <Large $w={66}>
            <LargeIcon $pt={4}><CompareIco /></LargeIcon>
            <LargeLine>Comparar</LargeLine>
            <LargeLine><Caret /></LargeLine>
          </Large>
        </GroupBody>
        <GroupLabel>Comparar</GroupLabel>
      </Group>

      <Group $w={118}>
        <GroupBody>
          <Large $w={60} $off>
            <LargeIcon $pt={2}><BlockIco /></LargeIcon>
            <LargeLine>Bloquear</LargeLine>
            <LargeLine>Autores<Caret $off /></LargeLine>
          </Large>
          <Large $w={50}>
            <LargeIcon $pt={4}><RestrictIco /></LargeIcon>
            <LargeLine>Restringir</LargeLine>
            <LargeLine>Edição</LargeLine>
          </Large>
        </GroupBody>
        <GroupLabel>Proteger</GroupLabel>
      </Group>

      <Group $w={83}>
        <GroupBody>
          <Large $w={80}>
            <LargeIcon $pt={3}><InkIco /></LargeIcon>
            <LargeLine>Iniciar Escrita</LargeLine>
            <LargeLine>à Tinta</LargeLine>
          </Large>
        </GroupBody>
        <GroupLabel>Tinta</GroupLabel>
      </Group>

      <Collapse><ChevronUp /></Collapse>
    </Ribbon>

    <Middle>
      <Workspace>
        <RulerRow>
          <Corner>
            <CornerInner>
              <Ico w={7} h={6}><path d="M1 0v5h6" stroke="#444" strokeWidth="2" /></Ico>
            </CornerInner>
          </Corner>
          <HRulerWrap><HRuler /></HRulerWrap>
        </RulerRow>
        <DocRow>
          <VRulerWrap><VRuler /></VRulerWrap>
          <Page>
            <Sheet>
              <Uni $bold>UNIVERSIDADE FEDERAL DỎ PAMPA</Uni>
              <Uni>(Lei n. 11.640, de 11 de janeiro de 2008)</Uni>
              <DocTitle>CERTIDÃO</DocTitle>
              <Para $mt={37}>
                <Indent />Certifico, a pedido do interessado, que<br />
                <Strong>xxxxxxxxxxxxxxxxxxxxxxxx</Strong>, natural de xxxxxxxxxx, nascido em<br />
                xxxxxxxxxxxx, portador da Cédula de Identidade nº<br />
                xxxxxxxxxxxx, concluiu o Curso de xxxxxxxx desta Universidade<br />
                no dia xxxxxxxxxxxxxx, estando apto a colar grau.
              </Para>
              <Para $mt={15}>
                <Indent />A Colação de Grau está agendada para o dia<br />
                xxxxxxxxxxxxxxxxxxxxxxxxxxxx, conforme a Portaria N°2264, de<br />
                17 de dezembro de 2019.
              </Para>
              <DateLine $mt={16}>Bag<TextCaret />é, <Tight>13 de março de 2020.</Tight></DateLine>
            </Sheet>
          </Page>
        </DocRow>
      </Workspace>

      <Pane>
        <PaneHead>
          <PaneTitle>Verificador de Aces...</PaneTitle>
          <Caret $size={4.5} />
          <Slot $w={26}><CloseIco size={10} color="#666" /></Slot>
        </PaneHead>
        <PaneSub $mt={7}>Resultados da Inspeção</PaneSub>
        <Results>
          <Banner>
            <WarnRow>
              <WarnIcon><WarnTri /></WarnIcon>
              <div>Não é possível executar o<br />Verificador de Acessibilidade</div>
            </WarnRow>
            Não é possível verificar a existência de<br />
            problemas de acessibilidade no tipo de<br />
            arquivo atual.
          </Banner>
        </Results>
        <PaneSub $mt={17}>
          Informações Adicionais
          <Ico w={9} h={6}><path d="M0.700 1L4.500 4.800 8.300 1" stroke="#777" strokeWidth="1.600" /></Ico>
        </PaneSub>
        <PaneText $mt={10}>
          Selecione e corrija cada problema listado<br />
          acima para fazer com que este<br />
          documento fique acessível a pessoas<br />
          com necessidades especiais.
        </PaneText>
        <PaneText $mt={17} $link>
          Leia mais sobre como tornar acessíveis<br />
          os documentos
        </PaneText>
      </Pane>
    </Middle>

    <StatusBar>
      <StatusText $w={93}>PÁGINA 1 DE 1</StatusText>
      <StatusText $w={84}>62 PALAVRAS</StatusText>
      <StatusIcon $w={15}><ProofIco /></StatusIcon>
      <StatusIcon $w={15} $ml={20}><MacroIco /></StatusIcon>
      <StatusIcon $w={14} $ml={853}><ReadIco /></StatusIcon>
      <StatusIcon $w={38} $ml={12} $on><PrintIco /></StatusIcon>
      <StatusIcon $w={14} $ml={12}><WebIco /></StatusIcon>
      <Zoom>
        <Ico w={6} h={2}><rect width="6" height="2" fill="#fff" /></Ico>
        <Track><Thumb /></Track>
        <Ico w={8} h={8}><path d="M4 0v8M0 4h8" stroke="#fff" strokeWidth="2" /></Ico>
      </Zoom>
      <ZoomText>100%</ZoomText>
    </StatusBar>

    <Taskbar>
      <StartBtn><WinLogo /></StartBtn>
      <SearchBox><SearchIco />Digite aqui para pesquisar</SearchBox>
      <TaskSlot $w={48}><CortanaIco /></TaskSlot>
      <TaskSlot $w={48}><TaskViewIco /></TaskSlot>
      <TaskSlot $w={40} $run $ml={7}><ChromeIco /></TaskSlot>
      <TaskSlot $w={40} $run $ml={9}><FolderIco /></TaskSlot>
      <TaskSlot $w={40} $run $ml={9}><FaEdgeLegacy size={22} color="#0a78d7" /></TaskSlot>
      <TaskSlot $w={40} $run $ml={9}><PdfIco /></TaskSlot>
      <TaskSlot $w={40} $run $ml={9}><LinkAppIco /></TaskSlot>
      <TaskSlot $w={48} $run $active $ml={5}><WordBig /></TaskSlot>
      <Tray>
        <TrayIcon $w={24}><TrayUp /></TrayIcon>
        <TrayIcon $w={24}><PowerIco /></TrayIcon>
        <TrayIcon $w={24}><NetIco /></TrayIcon>
        <TrayIcon $w={22}><VolIco /></TrayIcon>
        <Clock>02:17<br />23/06/2020</Clock>
        <NotifyBtn><NotifyIco /></NotifyBtn>
      </Tray>
    </Taskbar>
  </Win>
);

export default App;
